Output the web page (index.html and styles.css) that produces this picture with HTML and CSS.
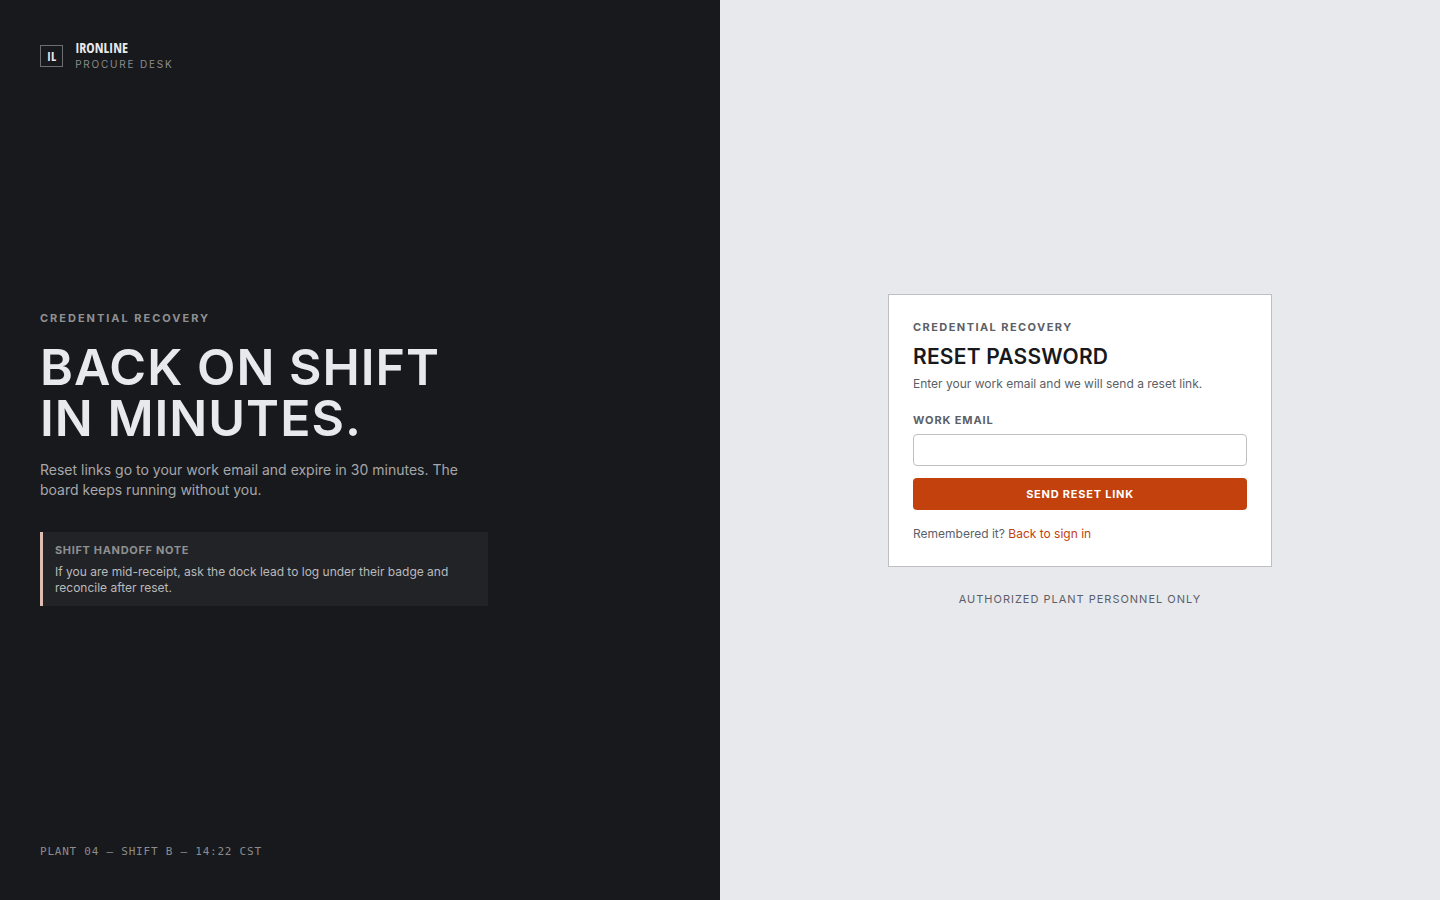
FILE: index.html
```html
<!DOCTYPE html>
<html lang="en">
<head>
    <meta charset="UTF-8">
    <meta name="viewport" content="width=device-width, initial-scale=1.0">
    <title>Reset password - Ironline Procure Desk</title>
    <link rel="stylesheet" href="styles.css">
</head>
<body>
    <div class="page">
        <section class="intro">
            <header class="brand">
                <span class="brand-mark">IL</span>
                <div>
                    <div class="brand-name">IRONLINE</div>
                    <div class="brand-sub">PROCURE DESK</div>
                </div>
            </header>

            <div class="pitch">
                <p class="eyebrow">CREDENTIAL RECOVERY</p>
                <h1>BACK ON SHIFT<br>IN MINUTES.</h1>
                <p class="lead">Reset links go to your work email and expire in 30 minutes. The board keeps running without you.</p>
                <aside class="note">
                    <h2 class="note-title">SHIFT HANDOFF NOTE</h2>
                    <p>If you are mid-receipt, ask the dock lead to log under their badge and reconcile after reset.</p>
                </aside>
            </div>

            <footer class="plant">PLANT 04 — SHIFT B — 14:22 CST</footer>
        </section>

        <main class="access">
            <form class="card">
                <p class="card-eyebrow">CREDENTIAL RECOVERY</p>
                <h2 class="card-title">RESET PASSWORD</h2>
                <p class="card-text">Enter your work email and we will send a reset link.</p>
                <label for="email">WORK EMAIL</label>
                <input type="email" id="email" name="email">
                <button type="submit">SEND RESET LINK</button>
                <p class="signin">Remembered it? <a href="#">Back to sign in</a></p>
            </form>
            <p class="legal">AUTHORIZED PLANT PERSONNEL ONLY</p>
        </main>
    </div>
</body>
</html>
```
FILE: styles.css
```css
* {
    box-sizing: border-box;
}

body {
    margin: 0;
    font-family: Inter, 'Liberation Sans', sans-serif;
    font-size: 12px;
    line-height: 16px;
    color: #18191c;
    background: #e8e9ed;
}

h1, h2, p {
    margin: 0;
}

.page {
    display: grid;
    grid-template-columns: 1fr 1fr;
    min-height: 100vh;
}

/* Left panel */
.intro {
    display: flex;
    flex-direction: column;
    justify-content: space-between;
    padding: 40px;
    background: #18191c;
    color: #e8e9ed;
}

.brand {
    display: flex;
    align-items: center;
    gap: 12px;
}

.brand-mark {
    padding: 2px 6px;
    border: 1px solid #6d6e71;
    font-family: 'Liberation Sans Narrow', 'Open Sans Condensed', 'DejaVu Sans Condensed', sans-serif;
    font-size: 13px;
    font-weight: 700;
}

.brand-name {
    font-family: 'Liberation Sans Narrow', 'Open Sans Condensed', 'DejaVu Sans Condensed', sans-serif;
    font-size: 14px;
    font-weight: 700;
}

.brand-sub {
    font-size: 10px;
    letter-spacing: 0.18em;
    color: #8b8c8e;
}

.eyebrow {
    margin-bottom: 16px;
    font-size: 11px;
    font-weight: 700;
    letter-spacing: 0.18em;
    color: #8f9092;
}

h1 {
    margin-bottom: 16px;
    font-size: 50px;
    font-weight: 600;
    line-height: 51px;
    letter-spacing: 0.02em;
}

.lead {
    max-width: 448px;
    font-size: 14px;
    line-height: 20px;
    color: #a6a7aa;
}

.note {
    max-width: 448px;
    margin-top: 32px;
    padding: 10px 12px;
    border-left: 3px solid #dfbdb2;
    background: #222326;
    color: #b9babd;
}

.note-title {
    margin-bottom: 6px;
    font-size: 11px;
    font-weight: 700;
    line-height: 16px;
    letter-spacing: 0.06em;
    color: #8f9092;
}

.plant {
    font-family: 'DejaVu Sans Mono', 'Liberation Mono', monospace;
    font-size: 11px;
    letter-spacing: 0.07em;
    color: #8b8c8e;
}

/* Right panel */
.access {
    display: flex;
    flex-direction: column;
    align-items: center;
    justify-content: center;
    padding: 24px;
}

.card {
    width: 100%;
    max-width: 384px;
    padding: 24px;
    border: 1px solid #bfc0c4;
    background: #fff;
}

.card-eyebrow {
    margin-bottom: 8px;
    font-size: 11px;
    font-weight: 700;
    letter-spacing: 0.13em;
    color: #5c5f66;
}

.card-title {
    margin-bottom: 4px;
    font-size: 21px;
    font-weight: 600;
    line-height: 28px;
    letter-spacing: 0.01em;
}

.card-text {
    margin-bottom: 20px;
    line-height: 18px;
    color: #5c5f66;
}

label {
    display: block;
    margin-bottom: 7px;
    font-size: 11px;
    font-weight: 700;
    line-height: 14px;
    letter-spacing: 0.08em;
    color: #5c5f66;
}

input {
    display: block;
    width: 100%;
    height: 32px;
    padding: 0 10px;
    border: 1px solid #bfc0c4;
    border-radius: 4px;
    background: #fff;
    font: inherit;
}

button {
    display: block;
    width: 100%;
    height: 32px;
    margin: 12px 0 16px;
    border: none;
    border-radius: 4px;
    background: #c2410c;
    color: #fff;
    font-family: inherit;
    font-size: 11px;
    font-weight: 700;
    letter-spacing: 0.07em;
    cursor: pointer;
}

button:hover {
    background: #a8380a;
}

.signin {
    color: #5c5f66;
}

.signin a {
    color: #c2410c;
    text-decoration: none;
}

.legal {
    margin-top: 24px;
    font-size: 11px;
    letter-spacing: 0.09em;
    color: #5c5f66;
}

@media (max-width: 800px) {
    .page {
        grid-template-columns: 1fr;
    }

    .intro {
        gap: 40px;
    }
}
```
